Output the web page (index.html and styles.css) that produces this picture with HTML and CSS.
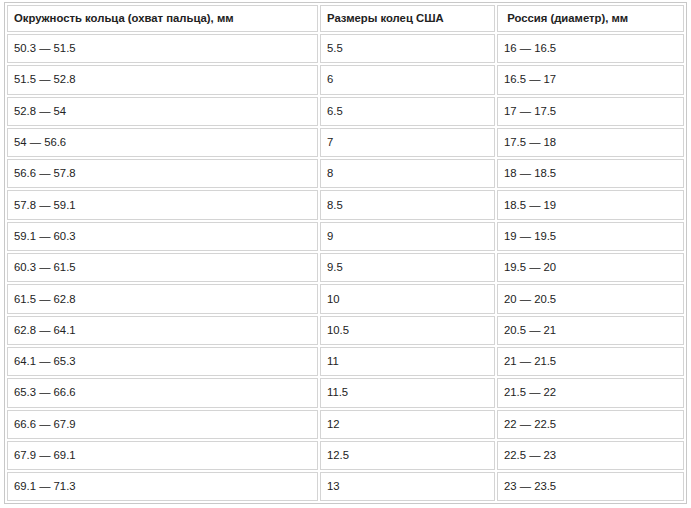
FILE: index.html
```html
<!DOCTYPE html>
<html lang="ru">
<head>
<meta charset="utf-8">
<link rel="stylesheet" href="styles.css">
</head>
<body>
<table class="sizes">
  <colgroup>
    <col class="c1">
    <col class="c2">
    <col class="c3">
  </colgroup>
  <thead>
    <tr><th>Окружность кольца (охват пальца), мм</th><th>Размеры колец США</th><th>&nbsp;Россия (диаметр), мм</th></tr>
  </thead>
  <tbody>
    <tr><td>50.3 — 51.5</td><td>5.5</td><td>16 — 16.5</td></tr>
    <tr><td>51.5 — 52.8</td><td>6</td><td>16.5 — 17</td></tr>
    <tr><td>52.8 — 54</td><td>6.5</td><td>17 — 17.5</td></tr>
    <tr><td>54 — 56.6</td><td>7</td><td>17.5 — 18</td></tr>
    <tr><td>56.6 — 57.8</td><td>8</td><td>18 — 18.5</td></tr>
    <tr><td>57.8 — 59.1</td><td>8.5</td><td>18.5 — 19</td></tr>
    <tr><td>59.1 — 60.3</td><td>9</td><td>19 — 19.5</td></tr>
    <tr><td>60.3 — 61.5</td><td>9.5</td><td>19.5 — 20</td></tr>
    <tr><td>61.5 — 62.8</td><td>10</td><td>20 — 20.5</td></tr>
    <tr><td>62.8 — 64.1</td><td>10.5</td><td>20.5 — 21</td></tr>
    <tr><td>64.1 — 65.3</td><td>11</td><td>21 — 21.5</td></tr>
    <tr><td>65.3 — 66.6</td><td>11.5</td><td>21.5 — 22</td></tr>
    <tr><td>66.6 — 67.9</td><td>12</td><td>22 — 22.5</td></tr>
    <tr><td>67.9 — 69.1</td><td>12.5</td><td>22.5 — 23</td></tr>
    <tr><td>69.1 — 71.3</td><td>13</td><td>23 — 23.5</td></tr>
  </tbody>
</table>
</body>
</html>
```
FILE: styles.css
```css
html, body {
  margin: 0;
  padding: 0;
  background: #fff;
}
body {
  padding: 2px 0 0 4px;
  font-family: "Liberation Sans", Arial, sans-serif;
  font-size: 11.3px;
  color: #222;
}
.sizes {
  border: 1px solid #c8c8c8;
  border-collapse: separate;
  border-spacing: 2px;
  width: 683px;
  table-layout: fixed;
}
.c1 { width: 311px; }
.c2 { width: 175px; }
.c3 { width: 187px; }
.sizes th,
.sizes td {
  border: 1px solid #d4d4d4;
  text-align: left;
  padding: 0 0 0 6px;
  height: 29.3px;
  box-sizing: border-box;
  line-height: 13px;
  vertical-align: middle;
}
.sizes th {
  font-weight: bold;
  height: 27px;
}
```
